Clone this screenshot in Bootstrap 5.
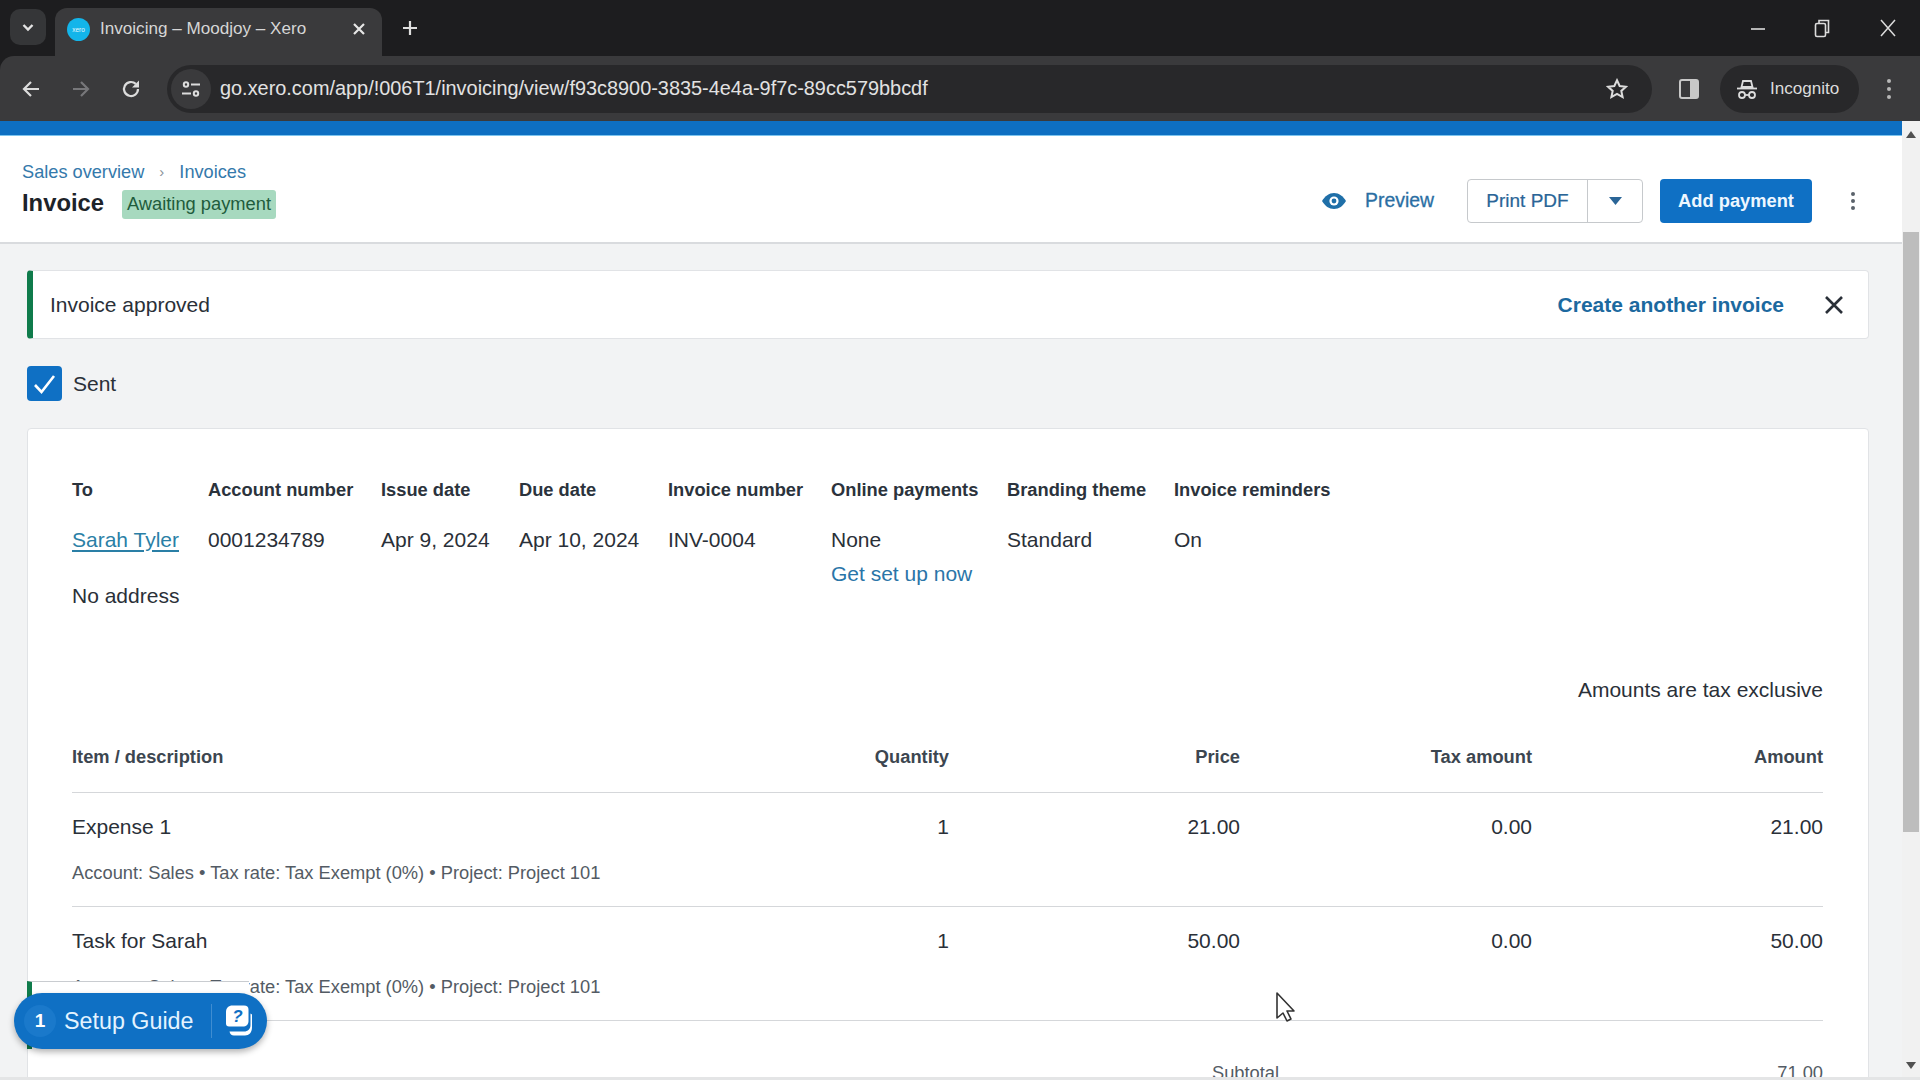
<!DOCTYPE html>
<html lang="en">
<head>
<meta charset="utf-8">
<title>Invoicing – Moodjoy – Xero</title>
<link href="https://cdn.jsdelivr.net/npm/bootstrap@5.3.0/dist/css/bootstrap.min.css" rel="stylesheet">
<style>
html,body{height:1080px;overflow:hidden;margin:0}
body{font-family:"Liberation Sans",Arial,sans-serif;background:#f2f3f4;color:#2a3038;font-size:21px;position:relative}
svg{display:block;flex:none}
.browser-top{background:#1d1d1f}
.tabstrip{height:56px;padding:0 0 0 10px}
.tab-menu{width:36px;height:36px;margin-top:9px;background:#353638;border-radius:10px;color:#e4e4e4}
.tab-on{width:327px;height:48px;margin:8px 0 0 9px;background:#3a3a3c;border-radius:12px 12px 0 0;padding:0 16px 6px 12px;color:#d6d6d6;font-size:17.1px;gap:10px;position:relative}
.fav{width:23px;height:23px;border-radius:50%;background:#13b5ea;color:#e8f8fe;font-size:6.5px;line-height:23px;text-align:center}
.tab-title{flex:1;white-space:nowrap}
.tab-x{color:#e6e6e6}
.new-tab{margin-left:20px;color:#dedede;height:56px}
.win-ctl{margin-left:auto;gap:49px;padding-right:23px;color:#dcdcdc}
.toolbar{height:65px;background:#3a3a3c;padding:0 0 0 21px;color:#dcdcdc;border-radius:14px 0 0 0}
.nav-ic{gap:30px;margin-right:26px}
.dim-ic{color:#77777a}
.url-wrap{width:1485px;height:48px;background:#28282a;border-radius:24px;padding:0 24px 0 4px}
.site-ic{width:40px;height:40px;border-radius:50%;background:#3a3a3c;margin-right:9px}
.url-txt{flex:1;font-size:19.9px;color:#e2e2e2;white-space:nowrap}
.panel-ic{margin:0 21px 0 27px}
.incog{height:48px;width:139px;background:#28282a;border-radius:24px;padding-left:16px;gap:12px;font-size:17.1px;color:#dcdcdc}
.kebab-ic{margin-left:27px}
.app-wrap{height:959px;overflow:hidden}
.app-main{flex:1;min-width:0;overflow:hidden}
.blue-bar{height:15px;background:#0e6fc2;border-bottom:1px solid #7cc4ee}
.page-head{height:108px;background:#fff;border-bottom:2px solid #d9dbde;padding:0 46px 0 22px}
.head-left{margin-bottom:9px}
.head-right{margin-top:24px}
.crumbs{font-size:18.2px;gap:15px;margin-top:9px;line-height:24px}
.crumbs a{color:#3479ab;text-decoration:none}
.crumb-sep{color:#8a9199;font-size:15px}
.head-title{font-size:23.8px;font-weight:700;color:#1d2329;line-height:30px}
.status-pill{background:#a7d9bf;color:#1f5c3c;font-size:18.3px;line-height:24px;padding:2px 5px 3px;border-radius:3px;margin:2px 0 0 18px}
.preview-btn{color:#2a6ea3;font-size:19.4px;gap:18px;margin-right:33px;-webkit-text-stroke:.3px}
.pdf-group{height:44px;border:1px solid #c6c9cc;border-radius:4px;font-size:19px;color:#2a6597;margin-right:17px;-webkit-text-stroke:.2px}
.pdf-main{width:120px;height:100%;border-right:1px solid #c6c9cc}
.pdf-caret{width:54px}
.add-pay{width:152px;height:44px;background:#0f70c4;color:#eef7ff;border-radius:4px;font-size:18.3px;font-weight:700}
.more-ic{margin-left:38px;color:#5a626b}
.page-body{padding:26px 33px 0 27px}
.notice{height:69px;background:#fff;border:1px solid #e1e3e6;border-left:6px solid #0f7b4b;border-radius:4px;padding:0 24px 0 17px}
.create-link{color:#1c699f;font-weight:700;font-size:21px;margin-right:40px}
.sent-row{margin-top:27px;height:35px;gap:11px}
.sent-box{width:35px;height:35px;background:#0f70c4;border-radius:4px}
.sheet{margin-top:27px;background:#fff;border:1px solid #e1e3e6;border-radius:4px 4px 0 0;padding:49px 45px 0 44px;height:700px}
.meta-grid{display:grid;grid-template-columns:136px 173px 138px 149px 163px 176px 167px auto;line-height:24px}
.meta-head{font-size:18.3px;font-weight:700;color:#2b333c;padding-bottom:26px}
.name-link{color:#2a7fa6;text-decoration:underline;text-underline-offset:3px}
.setup-now{grid-column:6;margin-top:10px;color:#2a75a8}
.no-addr{margin-top:-2px;line-height:24px}
.tax-note{text-align:right;line-height:24px;margin-top:70px}
.line-grid{display:grid;grid-template-columns:1fr 292px 291px 292px 291px;text-align:right;align-items:center}
.line-grid>*:first-child{text-align:left}
.line-head{margin-top:39px;height:52px;padding-bottom:20px;font-size:18.3px;font-weight:700;color:#3c4650;border-bottom:1px solid #d5d7da}
.line-row{height:114px;border-bottom:1px solid #d5d7da;align-items:start;padding-top:21px;line-height:26px}
.line-sub{grid-column:1/-1;text-align:left;font-size:18.3px;color:#535b64;line-height:24px}
.total-row{margin-top:42px;font-size:18.3px;color:#535b64;display:flex;justify-content:flex-end;line-height:20px}
.total-lab{width:300px}
.total-amt{width:311px;text-align:right}
.scroll-col{width:18px;background:#f1f1f1;flex:none}
.scroll-up{height:18px;color:#505050;padding-top:8px}
.scroll-thumb{height:600px;margin:93px 1px 0;background:#bdbdbd}
.scroll-dn{margin-top:auto;height:24px;color:#505050;padding-bottom:6px}
.setup-shade{position:absolute;left:27px;top:981px;width:222px;height:68px;background:#fff;border-left:5px solid #0f7b4b;border-top:1px solid #c9ccd0}
.setup-pill{position:absolute;left:14px;top:993px;width:253px;height:56px;background:#0f70c4;border-radius:28px;color:#e4f3ff;box-shadow:0 3px 6px rgba(0,0,0,.3);font-size:23.3px;padding-left:10px}
.setup-num{font-weight:700;font-size:19px;width:32px;height:32px;border-radius:50%;background:#1a79cb;color:#fff;margin-right:8px}
.setup-txt{width:147px;white-space:nowrap}
.setup-div{width:1px;height:34px;background:#3f8dd1;margin-right:12px}
.cursor-ic{position:absolute;left:1275px;top:991px}
.page-edge{position:absolute;left:0;right:0;top:1077px;height:3px;background:#e4e5e6}
</style>
</head>
<body>
<div class="browser-top">
<div class="tabstrip d-flex">
  <div class="tab-menu d-flex align-items-center justify-content-center">
    <svg width="14" height="14" viewBox="0 0 14 14" fill="none" stroke="currentColor" stroke-width="2.4"><path d="M2.5 5l4.5 4.5L11.5 5"/></svg>
  </div>
  <div class="tab-on d-flex align-items-center">
    <span class="fav">xero</span>
    <span class="tab-title">Invoicing – Moodjoy – Xero</span>
    <svg class="tab-x" width="14" height="14" viewBox="0 0 14 14" stroke="currentColor" stroke-width="2.2"><path d="M2 2l10 10M12 2L2 12"/></svg>
  </div>
  <div class="new-tab d-flex align-items-center">
    <svg width="16" height="16" viewBox="0 0 16 16" stroke="currentColor" stroke-width="2.2"><path d="M8 1v14M1 8h14"/></svg>
  </div>
  <div class="win-ctl d-flex align-items-center">
    <svg width="14" height="14" viewBox="0 0 14 14" stroke="currentColor" stroke-width="1.6"><path d="M0 8h14"/></svg>
    <svg width="16" height="20" viewBox="0 0 16 20" fill="none" stroke="currentColor" stroke-width="1.6"><rect x="1.5" y="5.5" width="10" height="13" rx="1.5"/><path d="M5 5V2.5h9.5v12H11.5"/></svg>
    <svg width="18" height="18" viewBox="0 0 18 18" stroke="currentColor" stroke-width="1.5"><path d="M2 1l14 16M16 1L2 17"/></svg>
  </div>
</div>
<div class="toolbar d-flex align-items-center">
  <div class="nav-ic d-flex align-items-center">
    <svg width="20" height="20" viewBox="0 0 20 20" fill="none" stroke="currentColor" stroke-width="2.2"><path d="M18 10H3M10 3l-7 7 7 7"/></svg>
    <svg class="dim-ic" width="20" height="20" viewBox="0 0 20 20" fill="none" stroke="currentColor" stroke-width="2.2"><path d="M2 10h15M10 3l7 7-7 7"/></svg>
    <svg width="20" height="20" viewBox="0 0 20 20" fill="none" stroke="currentColor" stroke-width="2.2"><path d="M17 10a7 7 0 1 1-2.2-5.1"/><path d="M18 1.5v7h-7z" fill="currentColor" stroke="none"/></svg>
  </div>
  <div class="url-wrap d-flex align-items-center">
    <div class="site-ic d-flex align-items-center justify-content-center">
      <svg width="20" height="20" viewBox="0 0 20 20" fill="none" stroke="currentColor" stroke-width="2"><circle cx="5" cy="5.5" r="2.2"/><path d="M10 5.5h9M1 14.5h9"/><circle cx="15" cy="14.5" r="2.2"/></svg>
    </div>
    <span class="url-txt">go.xero.com/app/!006T1/invoicing/view/f93c8900-3835-4e4a-9f7c-89cc579bbcdf</span>
    <svg width="22" height="22" viewBox="0 0 24 24" fill="none" stroke="currentColor" stroke-width="2.2"><path d="M12 2.5l2.9 6.2 6.8.8-5 4.6 1.4 6.7-6.1-3.4-6.1 3.4 1.4-6.7-5-4.6 6.8-.8z"/></svg>
  </div>
  <svg class="panel-ic" width="20" height="20" viewBox="0 0 20 20"><rect x="1" y="1" width="18" height="18" rx="2" fill="none" stroke="#c8c8c8" stroke-width="2"/><rect x="11" y="1" width="8" height="18" fill="#c8c8c8"/></svg>
  <div class="incog d-flex align-items-center">
    <svg width="22" height="22" viewBox="0 0 22 22" fill="none" stroke="currentColor" stroke-width="1.8"><path d="M7 3h8l1.500 6h-11z"/><path d="M1 10.500h20"/><circle cx="6" cy="17" r="3"/><circle cx="16" cy="17" r="3"/><path d="M9 17h4"/></svg>
    <span>Incognito</span>
  </div>
  <svg class="kebab-ic" width="6" height="22" viewBox="0 0 6 22" fill="#b8b8b8"><circle cx="3" cy="3" r="2"/><circle cx="3" cy="11" r="2"/><circle cx="3" cy="19" r="2"/></svg>
</div>
</div>
<div class="app-wrap d-flex">
  <div class="app-main">
    <div class="blue-bar"></div>
    <div class="page-head d-flex justify-content-between align-items-center">
      <div class="head-left">
        <div class="crumbs d-flex align-items-center"><a href="#">Sales overview</a><span class="crumb-sep">›</span><a href="#">Invoices</a></div>
        <div class="d-flex align-items-center mt-1">
          <span class="head-title">Invoice</span><span class="status-pill">Awaiting payment</span>
        </div>
      </div>
      <div class="head-right d-flex align-items-center">
        <div class="preview-btn d-flex align-items-center">
          <svg width="26" height="18" viewBox="0 0 26 18"><path d="M1 9c3-5 7-8 12-8s9 3 12 8c-3 5-7 8-12 8S4 14 1 9z" fill="#1f6fa8"/><circle cx="13" cy="9" r="4.6" fill="#fff"/><circle cx="13" cy="9" r="2.4" fill="#1f6fa8"/></svg>
          <span>Preview</span>
        </div>
        <div class="pdf-group d-flex align-items-center">
          <div class="pdf-main d-flex align-items-center justify-content-center">Print PDF</div>
          <div class="pdf-caret d-flex justify-content-center"><svg width="13" height="8" viewBox="0 0 13 8" fill="#2a6597"><path d="M0 0h13L6.500 8z"/></svg></div>
        </div>
        <div class="add-pay d-flex align-items-center justify-content-center">Add payment</div>
        <svg class="more-ic" width="6" height="20" viewBox="0 0 6 20" fill="currentColor"><circle cx="3" cy="3" r="2"/><circle cx="3" cy="10" r="2"/><circle cx="3" cy="17" r="2"/></svg>
      </div>
    </div>
    <div class="page-body">
      <div class="notice d-flex align-items-center">
        <span class="flex-grow-1">Invoice approved</span>
        <span class="create-link">Create another invoice</span>
        <svg width="20" height="20" viewBox="0 0 20 20" stroke="#2a3038" stroke-width="2.6"><path d="M2 2l16 16M18 2L2 18"/></svg>
      </div>
      <div class="sent-row d-flex align-items-center">
        <div class="sent-box d-flex align-items-center justify-content-center">
          <svg width="23" height="20" viewBox="0 0 23 20" fill="none" stroke="#fff" stroke-width="2.6"><path d="M2 11l6.500 7L21 2"/></svg>
        </div>
        <span>Sent</span>
      </div>
      <div class="sheet">
        <div class="meta-grid">
          <div class="meta-head">To</div><div class="meta-head">Account number</div><div class="meta-head">Issue date</div><div class="meta-head">Due date</div><div class="meta-head">Invoice number</div><div class="meta-head">Online payments</div><div class="meta-head">Branding theme</div><div class="meta-head">Invoice reminders</div>
          <div><a href="#" class="name-link">Sarah Tyler</a></div><div>0001234789</div><div>Apr 9, 2024</div><div>Apr 10, 2024</div><div>INV-0004</div><div>None</div><div>Standard</div><div>On</div>
          <div class="setup-now">Get set up now</div>
        </div>
        <div class="no-addr">No address</div>
        <div class="tax-note">Amounts are tax exclusive</div>
        <div class="line-grid line-head"><div>Item / description</div><div>Quantity</div><div>Price</div><div>Tax amount</div><div>Amount</div></div>
        <div class="line-grid line-row">
          <div>Expense 1</div><div>1</div><div>21.00</div><div>0.00</div><div>21.00</div>
          <div class="line-sub">Account: Sales • Tax rate: Tax Exempt (0%) • Project: Project 101</div>
        </div>
        <div class="line-grid line-row">
          <div>Task for Sarah</div><div>1</div><div>50.00</div><div>0.00</div><div>50.00</div>
          <div class="line-sub">Account: Sales • Tax rate: Tax Exempt (0%) • Project: Project 101</div>
        </div>
        <div class="total-row"><span class="total-lab">Subtotal</span><span class="total-amt">71.00</span></div>
      </div>
    </div>
  </div>
  <div class="scroll-col d-flex flex-column align-items-center">
    <div class="scroll-up d-flex align-items-center"><svg width="10" height="7" viewBox="0 0 10 7" fill="currentColor"><path d="M5 0l5 7H0z"/></svg></div>
    <div class="scroll-thumb align-self-stretch"></div>
    <div class="scroll-dn d-flex align-items-center"><svg width="10" height="7" viewBox="0 0 10 7" fill="currentColor"><path d="M0 0h10L5 7z"/></svg></div>
  </div>
</div>
<div class="setup-shade"></div>
<div class="setup-pill d-flex align-items-center">
  <span class="setup-num d-flex align-items-center justify-content-center">1</span><span class="setup-txt">Setup Guide</span><span class="setup-div"></span>
  <svg width="30" height="34" viewBox="0 0 30 34"><path d="M26.500 9.500l1.500 1v13c0 5-3 8-7 8H10c-2.500 0-4-1.500-4.500-4H20c4 0 6.500-2.500 6.500-6.500z" fill="#fff"/><path d="M8.500 1.500H20c3 0 4.500 1.500 4.500 4v11c0 4-2 6-6 6H5c-2 0-3-1-3-3V8c0-4 2.500-6.500 6.500-6.500z" fill="#fff"/><text x="13.500" y="18" text-anchor="middle" font-size="17" font-weight="700" font-style="italic" font-family="Liberation Sans" fill="#0f70c4">?</text></svg>
</div>
<svg class="cursor-ic" width="22" height="32" viewBox="0 0 22 32"><path d="M2 2v25l6-5 4 8 4-2-4-8h7z" fill="#fff" stroke="#333" stroke-width="1.6" stroke-linejoin="round"/></svg>
<div class="page-edge"></div>
<script src="https://cdn.jsdelivr.net/npm/bootstrap@5.3.0/dist/js/bootstrap.bundle.min.js"></script>
</body>
</html>
